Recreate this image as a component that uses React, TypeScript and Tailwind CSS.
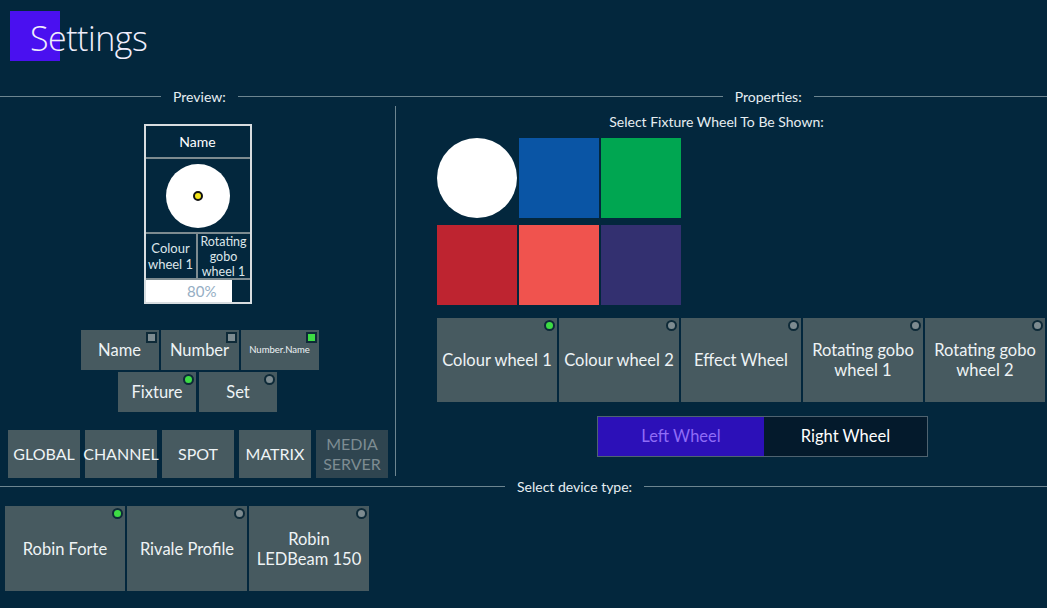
import React from "react";

const F = { fontFamily: 'Lato, "Open Sans", sans-serif' };

function Dot({ on, square }: { on?: boolean; square?: boolean }) {
  return (
    <span
      className={`absolute top-[2px] right-[2px] w-[11px] h-[11px] border-2 border-[#0e2a38] ${square ? "" : "rounded-full"} ${on ? "bg-[#3ddc44]" : "bg-[#7d8b90]"}`}
    />
  );
}

function Btn({ label, on, square, cls, text = "text-[16.5px]" }: { label: React.ReactNode; on?: boolean; square?: boolean; cls: string; text?: string }) {
  return (
    <div className={`relative bg-[#475a60] text-[#eef3f5] flex items-center justify-center text-center leading-[20px] ${text} ${cls}`}>
      {on !== undefined && <Dot on={on} square={square} />}
      <span>{label}</span>
    </div>
  );
}

function Divider({ children, left }: { children: React.ReactNode; left: number }) {
  return (
    <div className="flex items-center h-[20px]">
      <div className="h-px bg-[#6d8590]" style={{ width: left }} />
      <span className="px-3 text-[14px] text-[#e6eef2]">{children}</span>
      <div className="h-px bg-[#6d8590] flex-1" />
    </div>
  );
}

export default function App() {
  return (
    <div className="w-[1047px] h-[608px] bg-[#03273d] text-white overflow-hidden relative" style={F}>
      <div className="h-[86px] relative">
        <div className="absolute left-[10px] top-[11px] w-[50px] h-[50px] bg-[#4a10f0]" />
        <div className="absolute left-[30px] top-[14px] text-[34px] font-light text-[#f0eefc] leading-[48px]" style={{ fontFamily: '"Open Sans", sans-serif', fontWeight: 300, letterSpacing: "-0.5px" }}>Settings</div>
      </div>
      <div className="flex items-center h-[20px]">
        <div className="h-px bg-[#6d8590] w-[161px]" />
        <span className="px-3 text-[14px] text-[#e6eef2]">Preview:</span>
        <div className="h-px bg-[#6d8590] w-[485px]" />
        <span className="px-3 text-[14px] text-[#e6eef2]">Properties:</span>
        <div className="h-px bg-[#6d8590] flex-1" />
      </div>
      <div className="flex h-[370px]">
        <div className="w-[396px] border-r border-[#6d8590] flex flex-col items-center pt-[18px]">
          <div className="w-[108px] border-2 border-[#d8dde0] flex flex-col">
            <div className="h-[33px] border-b-2 border-[#7d8b90] flex items-center justify-center text-[14px]">Name</div>
            <div className="h-[75px] border-b-2 border-[#7d8b90] flex items-center justify-center">
              <div className="w-[64px] h-[64px] rounded-full bg-white flex items-center justify-center">
                <div className="w-[10px] h-[10px] rounded-full bg-[#f3e51a] border-2 border-[#111]" />
              </div>
            </div>
            <div className="h-[46px] border-b-2 border-[#7d8b90] flex text-[13px] leading-[16px] text-[#dde6ea]">
              <div className="w-[52px] border-r-2 border-[#7d8b90] flex items-center justify-center text-center">Colour wheel 1</div>
              <div className="flex-1 flex items-center justify-center text-center leading-[15px] text-[12.5px]">Rotating gobo wheel 1</div>
            </div>
            <div className="h-[22px] flex">
              <div className="w-[86px] bg-white flex items-center justify-end pr-[15px] text-[#95aec4] text-[15px]">80%</div>
            </div>
          </div>
          <div className="mt-[26px] flex gap-[2px] pl-[4px]">
            <Btn label="Name" on={false} square cls="w-[78px] h-[40px]" />
            <Btn label="Number" on={false} square cls="w-[78px] h-[40px]" />
            <Btn label="Number.Name" on square cls="w-[78px] h-[40px]" text="text-[9.5px]" />
          </div>
          <div className="mt-[2px] flex gap-[3px]">
            <Btn label="Fixture" on cls="w-[78px] h-[40px]" />
            <Btn label="Set" on={false} cls="w-[78px] h-[40px]" />
          </div>
          <div className="mt-[18px] flex gap-[5px] self-start ml-[8px]">
            {["GLOBAL", "CHANNEL", "SPOT", "MATRIX"].map((l) => (
              <Btn key={l} label={l} cls="w-[72px] h-[48px]" text="text-[16px]" />
            ))}
            <div className="w-[72px] h-[48px] bg-[#2f4550] text-[#7d8c92] text-[16px] leading-[20px] flex items-center justify-center text-center">MEDIA SERVER</div>
          </div>
        </div>
        <div className="flex-1 flex flex-col">
          <div className="text-[14px] text-center text-[#e6eef2] mt-[5px] pr-[10px]">Select Fixture Wheel To Be Shown:</div>
          <div className="ml-[41px] mt-[6px] grid grid-cols-[80px_80px_80px] gap-x-[2px] gap-y-[7px]">
            <div className="w-[80px] h-[80px] rounded-full bg-white" />
            <div className="h-[80px] bg-[#0a55a5]" />
            <div className="h-[80px] bg-[#00a651]" />
            <div className="h-[80px] bg-[#be2430]" />
            <div className="h-[80px] bg-[#f0534e]" />
            <div className="h-[80px] bg-[#333070]" />
          </div>
          <div className="ml-[41px] mt-[13px] flex gap-[2px]">
            {["Colour wheel 1", "Colour wheel 2", "Effect Wheel", "Rotating gobo wheel 1", "Rotating gobo wheel 2"].map((l, i) => (
              <Btn key={l} label={l} on={i === 0} cls="w-[120px] h-[84px] px-[4px]" />
            ))}
          </div>
          <div className="ml-[201px] mt-[14px] w-[331px] h-[41px] border border-[#4f6370] flex">
            <div className="w-[166px] bg-[#2c10b8] text-[#8f6cf6] flex items-center justify-center text-[16.5px]">Left Wheel</div>
            <div className="flex-1 bg-[#041a2c] flex items-center justify-center text-[16.5px]">Right Wheel</div>
          </div>
        </div>
      </div>
      <Divider left={505}>Select device type:</Divider>
      <div className="mt-[10px] ml-[5px] flex gap-[2px]">
        <Btn label="Robin Forte" on cls="w-[120px] h-[85px]" />
        <Btn label="Rivale Profile" on={false} cls="w-[120px] h-[85px]" />
        <Btn label={<>Robin<br />LEDBeam 150</>} on={false} cls="w-[120px] h-[85px]" />
      </div>
    </div>
  );
}
